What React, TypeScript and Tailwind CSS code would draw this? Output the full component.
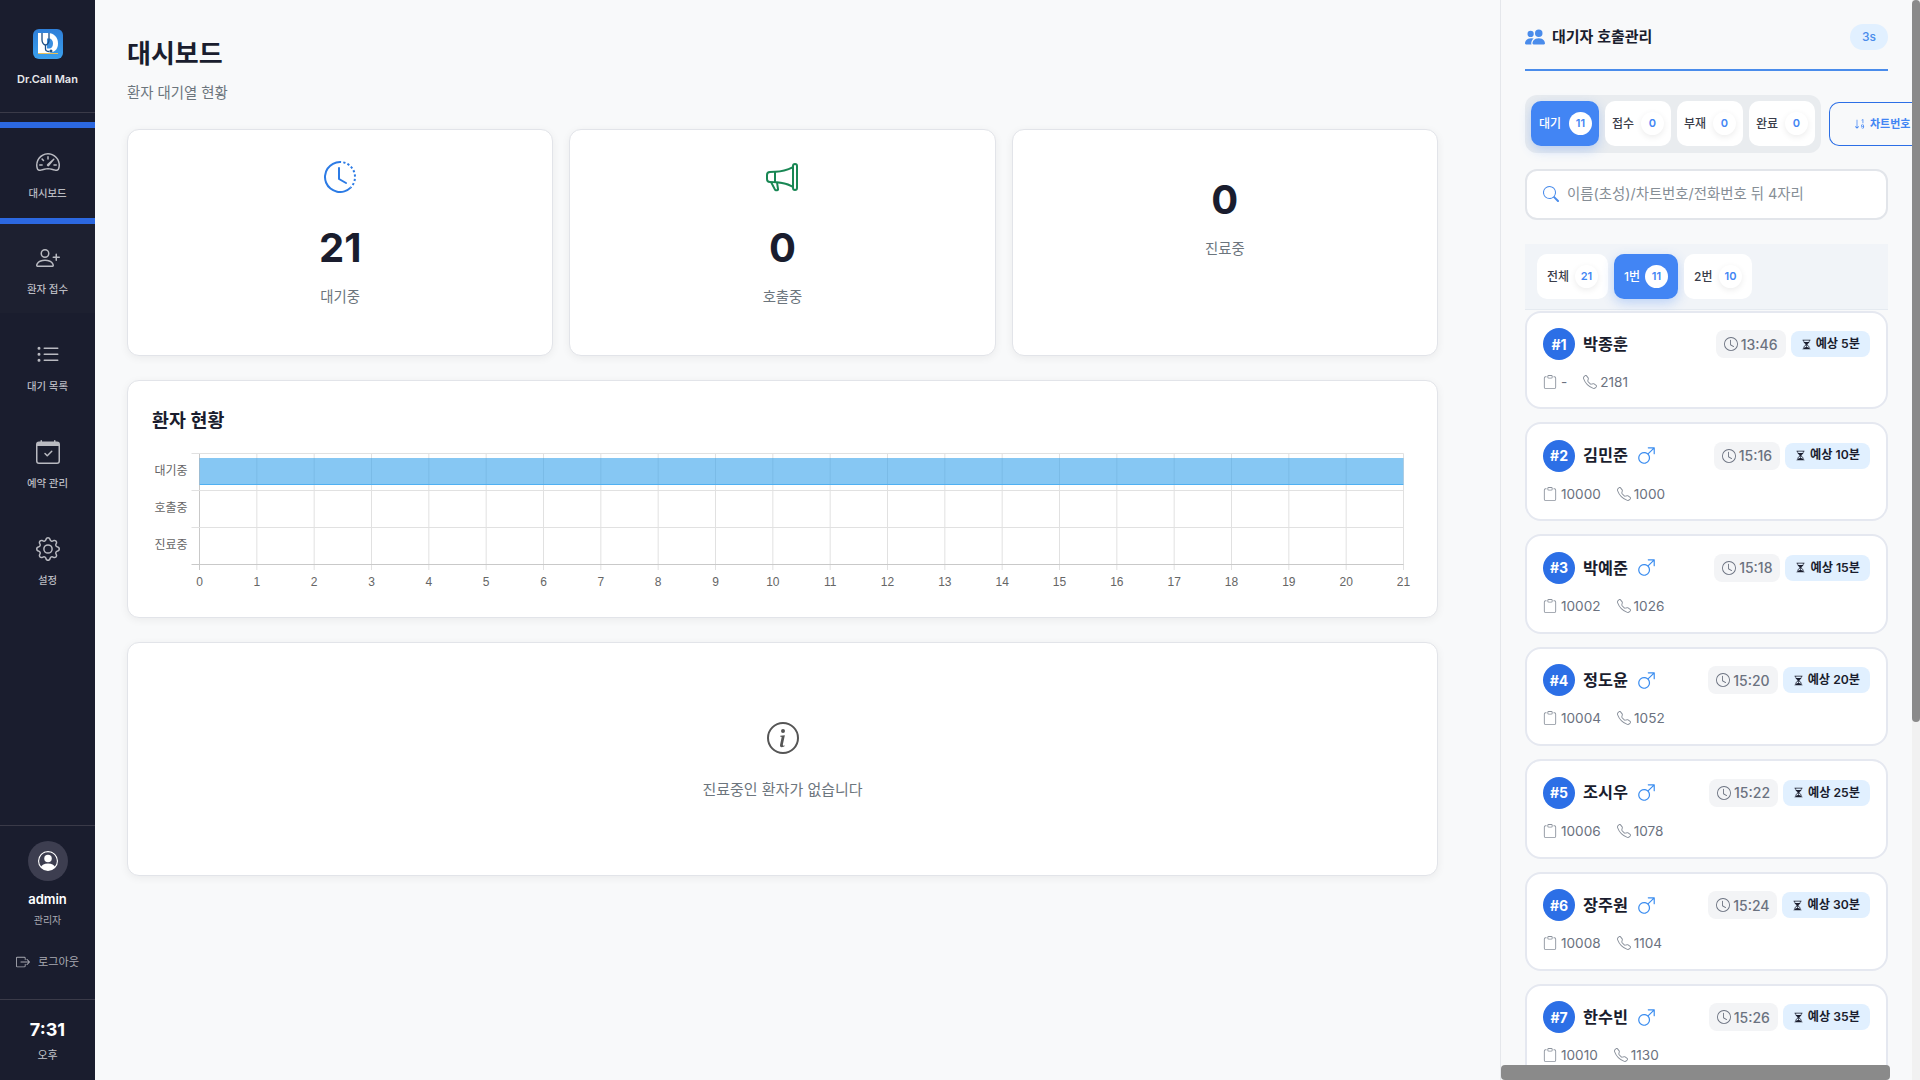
import React from "react";
import {
  BsClockHistory, BsMegaphone, BsInfoCircle, BsPeopleFill, BsSpeedometer2, BsPersonPlus, BsListUl,
  BsCalendarCheck, BsGear, BsPersonCircle, BsBoxArrowRight, BsSearch, BsSortNumericDown, BsClock,
  BsHourglassSplit, BsGenderMale, BsClipboard, BsTelephone,
} from "react-icons/bs";

const font = "font-['Inter','Noto_Sans_CJK_KR',sans-serif]";

function Logo() {
  return (
    <svg width="30" height="30" viewBox="0 0 30 30">
      <defs>
        <linearGradient id="lg" x1="0" y1="0" x2="0" y2="1">
          <stop offset="0" stopColor="#2f7fd8" />
          <stop offset="1" stopColor="#3aa0ee" />
        </linearGradient>
      </defs>
      <rect width="30" height="30" rx="6" fill="url(#lg)" />
      <path d="M5 4h10c6 0 10 4.500 10 10.500S21 24 15 24H5z" fill="#fff" />
      <path d="M14 9.500h2c2.500 0 4 2 4 5s-1.500 5-4 5h-2z" fill="#3a8fe0" />
      <path d="M9 4v7c0 3 2 5 3.500 5S16 14 16 11V4" fill="none" stroke="#1d4f86" strokeWidth="1.300" />
      <path d="M12.500 16v4c0 2 2 2.500 4 2.500" fill="none" stroke="#1d4f86" strokeWidth="1.300" />
      <circle cx="18" cy="22" r="1.500" fill="#1d4f86" />
      <rect x="5" y="24" width="20" height="1" fill="#e9c15a" />
    </svg>
  );
}

const navItems = [
  { icon: BsPersonPlus, label: "환자 접수", cls: "h-[89px] bg-[#1d2030] pt-[22px]", labelCls: "mt-[12px]" },
  { icon: BsListUl, label: "대기 목록", cls: "h-[97px] pt-[30px]", labelCls: "mt-[11.5px]" },
  { icon: BsCalendarCheck, label: "예약 관리", cls: "h-[97px] pt-[30px]", labelCls: "mt-[11.5px]" },
  { icon: BsGear, label: "설정", cls: "h-[97px] pt-[30px]", labelCls: "mt-[11.5px]" },
];

function Sidebar() {
  return (
    <aside className="flex h-[1080px] w-[95px] shrink-0 flex-col bg-[#1a1d2e]">
      <div className="flex h-[113px] flex-col items-center border-b border-[#3a3a48] pt-[29px]">
        <Logo />
        <div className="mt-[12px] text-[11px] leading-[16px] font-semibold text-[#e8e9ec]">Dr.Call Man</div>
      </div>
      <div className="mt-[9px] flex h-[102px] flex-col items-center border-y-[6px] border-[#2c68e0] pt-[22px] text-[#b9bac1]">
        <BsSpeedometer2 size={24} />
        <div className="mt-[11.5px] text-[10.4px] leading-[16px] font-medium">대시보드</div>
      </div>
      {navItems.map((n) => (
        <div key={n.label} className={`flex flex-col items-center text-[#b9bac1] ${n.cls}`}>
          <n.icon size={24} />
          <div className={`text-[10.4px] leading-[16px] font-medium ${n.labelCls}`}>{n.label}</div>
        </div>
      ))}
      <div className="mt-auto flex h-[175px] flex-col items-center border-t border-b border-[#3a3a48] pt-[15px]">
        <div className="flex h-[40px] w-[40px] items-center justify-center rounded-full bg-[#3d3e50] text-white">
          <BsPersonCircle size={20} />
        </div>
        <div className="mt-[9px] text-[13px] leading-[18px] font-semibold text-white">admin</div>
        <div className="mt-[4px] text-[10px] leading-[16px] text-[#a9aab2]">관리자</div>
        <div className="mt-[26px] flex items-center gap-[8px] text-[11.2px] leading-[16px] text-[#a9aab2]">
          <BsBoxArrowRight size={14} />
          <span>로그아웃</span>
        </div>
      </div>
      <div className="flex h-[80px] flex-col items-center pt-[18px]">
        <div className="text-[18px] leading-[24px] font-bold text-white">7:31</div>
        <div className="mt-[5px] text-[11px] leading-[16px] text-[#c3c4ca]">오후</div>
      </div>
    </aside>
  );
}

const cardCls = "rounded-xl border border-[#e2e4e9] bg-white shadow-[0_2px_8px_rgba(0,0,0,0.06)]";

function StatCard({ icon, value, label }: { icon?: React.ReactNode; value: string; label: string }) {
  return (
    <div className={`${cardCls} flex h-[227px] flex-1 flex-col items-center pt-[31px]`}>
      {icon && <div className="mb-[31px] flex h-[32px] items-center">{icon}</div>}
      <div className={`text-[40px] leading-[48px] font-bold text-[#1a1d2e] ${icon ? "" : "mt-[15px]"}`}>{value}</div>
      <div className="mt-[14px] text-[14.4px] leading-[22px] text-[#6c757d]">{label}</div>
    </div>
  );
}

function Chart() {
  const x0 = 71.5, x1 = 1275.5, w = (x1 - x0) / 21, row = 37;
  const rows = ["대기중", "호출중", "진료중"];
  return (
    <svg width="1309" height="160" viewBox="0 0 1309 160" className="block">
      {Array.from({ length: 22 }).map((_, i) => (
        <g key={i}>
          <line x1={x0 + i * w} x2={x0 + i * w} y1={0.5} y2={117} stroke={i === 0 ? "#c9c9c9" : "#e1e1e1"} />
          <text x={x0 + i * w} y={133} textAnchor="middle" fontSize="12" fill="#666" fontFamily="Liberation Sans">{i}</text>
        </g>
      ))}
      {[0, 1, 2].map((i) => (
        <g key={i}>
          <line x1={x0 - 8} x2={x1} y1={0.5 + i * row} y2={0.5 + i * row} stroke="#e1e1e1" />
          <text x={x0 - 12} y={22 + i * row} textAnchor="end" fontSize="12" fill="#666" fontFamily="Noto Sans CJK KR">{rows[i]}</text>
        </g>
      ))}
      <line x1={x0 - 8} x2={x1} y1={111.5} y2={111.5} stroke="#c9c9c9" />
      <rect x={x0} y={5} width={x1 - x0} height={26} fill="#36a2eb" fillOpacity="0.6" />
      <rect x={x0} y={31} width={x1 - x0} height={1} fill="#4fb0f2" />
    </svg>
  );
}

function Main() {
  return (
    <main className="h-[1080px] w-[1405px] shrink-0 overflow-hidden bg-[#f8f9fa] pr-[62px] pl-[32px]">
      <h1 className="mt-[37px] text-[26px] leading-[34px] font-bold text-[#1a1d2e]">대시보드</h1>
      <p className="mt-[11px] text-[14.4px] leading-[22px] text-[#6c757d]">환자 대기열 현황</p>
      <div className="mt-[25px] flex gap-[16px]">
        <StatCard icon={<BsClockHistory size={32} className="text-[#2c7be5]" />} value="21" label="대기중" />
        <StatCard icon={<BsMegaphone size={32} className="text-[#198754]" />} value="0" label="호출중" />
        <StatCard value="0" label="진료중" />
      </div>
      <section className={`${cardCls} mt-[24px] h-[238px]`}>
        <h2 className="mt-[25px] ml-[24px] text-[18.4px] leading-[28px] font-semibold text-[#1a1d2e]">환자 현황</h2>
        <div className="mt-[19px]">
          <Chart />
        </div>
      </section>
      <section className={`${cardCls} mt-[24px] flex h-[234px] flex-col items-center pt-[79px]`}>
        <BsInfoCircle size={32} className="text-[#555]" />
        <p className="mt-[24px] text-[15px] leading-[24px] text-[#6c757d]">진료중인 환자가 없습니다</p>
      </section>
    </main>
  );
}

const patients = [
  { n: 1, name: "박종훈", time: "13:46", eta: "예상 5분", chart: "-", phone: "2181", male: false },
  { n: 2, name: "김민준", time: "15:16", eta: "예상 10분", chart: "10000", phone: "1000", male: true },
  { n: 3, name: "박예준", time: "15:18", eta: "예상 15분", chart: "10002", phone: "1026", male: true },
  { n: 4, name: "정도윤", time: "15:20", eta: "예상 20분", chart: "10004", phone: "1052", male: true },
  { n: 5, name: "조시우", time: "15:22", eta: "예상 25분", chart: "10006", phone: "1078", male: true },
  { n: 6, name: "장주원", time: "15:24", eta: "예상 30분", chart: "10008", phone: "1104", male: true },
  { n: 7, name: "한수빈", time: "15:26", eta: "예상 35분", chart: "10010", phone: "1130", male: true },
];

function PatientCard({ p }: { p: (typeof patients)[number] }) {
  return (
    <div className={`shrink-0 rounded-2xl border-2 border-[#e5e8f0] bg-white px-[16px] ${p.male ? "h-[99.4px] pt-[15.5px]" : "h-[98px] pt-[15px]"}`}>
      <div className="flex h-[32px] items-center">
        <div className="flex h-[32px] w-[32px] items-center justify-center rounded-full bg-[#2c6fe6] text-[14px] font-bold text-white">#{p.n}</div>
        <div className="ml-[8px] text-[16.3px] font-bold text-[#1a1d2e]">{p.name}</div>
        {p.male && <BsGenderMale size={19} className="ml-[9px] text-[#3b8df0]" />}
        <div className="ml-auto flex h-[28px] items-center gap-[3px] rounded-lg bg-[#f3f4f6] px-[8px] text-[14px] font-medium text-[#6b7280]">
          <BsClock size={14} />
          <span>{p.time}</span>
        </div>
        <div className="ml-[5px] flex h-[26px] items-center gap-[4px] rounded-lg bg-[#e1f0ff] px-[10px] text-[12.2px] font-semibold text-[#1a1d2e]">
          <BsHourglassSplit size={11} />
          <span>{p.eta}</span>
        </div>
      </div>
      <div className="mt-[10px] flex items-center text-[13.6px] leading-[24px] text-[#6b7280]">
        <BsClipboard size={14} className="mr-[4px] text-[#8a919c]" />
        <span>{p.chart}</span>
        <BsTelephone size={14} className="mr-[3px] ml-[16px] text-[#8a919c]" />
        <span>{p.phone}</span>
      </div>
    </div>
  );
}

function Tab({ label, count, active, cls }: { label: string; count: string; active?: boolean; cls: string }) {
  return (
    <div className={`flex h-[45px] items-center justify-between rounded-[10px] text-[12px] font-medium ${cls} ${active ? "bg-[#4285f4] text-white shadow-[0_4px_12px_rgba(66,133,244,0.3)]" : "bg-white text-[#3a3d4a]"}`}>
      <span>{label}</span>
      <span className={`flex h-[23px] min-w-[23px] items-center justify-center rounded-full bg-white px-[3px] text-[11px] font-semibold text-[#4285f4] ${active ? "" : "shadow-[0_2px_6px_rgba(0,0,0,0.08)]"}`}>{count}</span>
    </div>
  );
}

function Panel() {
  return (
    <aside className="relative h-[1080px] w-[420px] shrink-0 overflow-hidden border-l border-[#e5e7eb] bg-[#f8f9fa] pl-[24px]">
      <div className="w-[363px]">
        <div className="flex h-[71px] items-center border-b-2 border-[#4a8ceb] pt-[5px]">
          <BsPeopleFill size={20} className="text-[#4a8ceb]" />
          <span className="ml-[7px] text-[15px] font-semibold text-[#1a1d2e]">대기자 호출관리</span>
          <span className="ml-auto flex h-[26px] w-[38px] items-center justify-center rounded-full bg-[#e1f0ff] text-[12px] font-medium text-[#4a8ceb]">3s</span>
        </div>
        <div className="mt-[24px] flex w-[387px] items-center">
          <div className="flex h-[58px] w-[296px] shrink-0 items-start gap-[6px] rounded-xl bg-[#e9ecef] px-[6px] pt-[6px]">
            <Tab label="대기" count="11" active cls="w-[68px] pr-[7px] pl-[8px]" />
            <Tab label="접수" count="0" cls="w-[66px] px-[7px]" />
            <Tab label="부재" count="0" cls="w-[66px] px-[7px]" />
            <Tab label="완료" count="0" cls="w-[66px] px-[7px]" />
          </div>
          <div className="ml-[8px] flex h-[44px] w-[90px] shrink-0 items-center gap-[4px] overflow-hidden rounded-l-[10px] border border-r-0 border-[#2c6fe6] pl-[24px] text-[11px] font-semibold whitespace-nowrap text-[#4285f4]">
            <BsSortNumericDown size={12} className="shrink-0" />
            <span>차트번호</span>
          </div>
        </div>
        <div className="mt-[16px] flex h-[51px] items-center rounded-xl border-2 border-[#e2e5ea] bg-white pb-[2px] pl-[16px]">
          <BsSearch size={16} className="text-[#4a8ceb]" />
          <span className="ml-[8px] text-[14.4px] text-[#868e96]">이름(초성)/차트번호/전화번호 뒤 4자리</span>
        </div>
        <div className="mt-[24px] flex h-[66px] items-center gap-[6px] border-b border-[#e5eaf0] bg-[#f1f4f8] pl-[12px]">
          <Tab label="전체" count="21" cls="w-[71px] px-[10px]" />
          <Tab label="1번" count="11" active cls="w-[64px] px-[10px]" />
          <Tab label="2번" count="10" cls="w-[68px] px-[10px]" />
        </div>
        <div className="mt-[1px] flex flex-col gap-[13px]">
          {patients.map((p) => (
            <PatientCard key={p.n} p={p} />
          ))}
        </div>
      </div>
      <div className="absolute top-0 right-0 bottom-0 w-[8px] bg-[#f1f1f1]">
        <div className="h-[722px] rounded-[4px] bg-[#8a8a8a]" />
      </div>
      <div className="absolute bottom-0 left-0 h-[15px] w-[389px] rounded-[4px] bg-[#8a8a8a]" />
    </aside>
  );
}

export default function App() {
  return (
    <div className={`flex h-[1080px] w-[1920px] overflow-hidden bg-[#f8f9fa] ${font}`}>
      <Sidebar />
      <Main />
      <Panel />
    </div>
  );
}
